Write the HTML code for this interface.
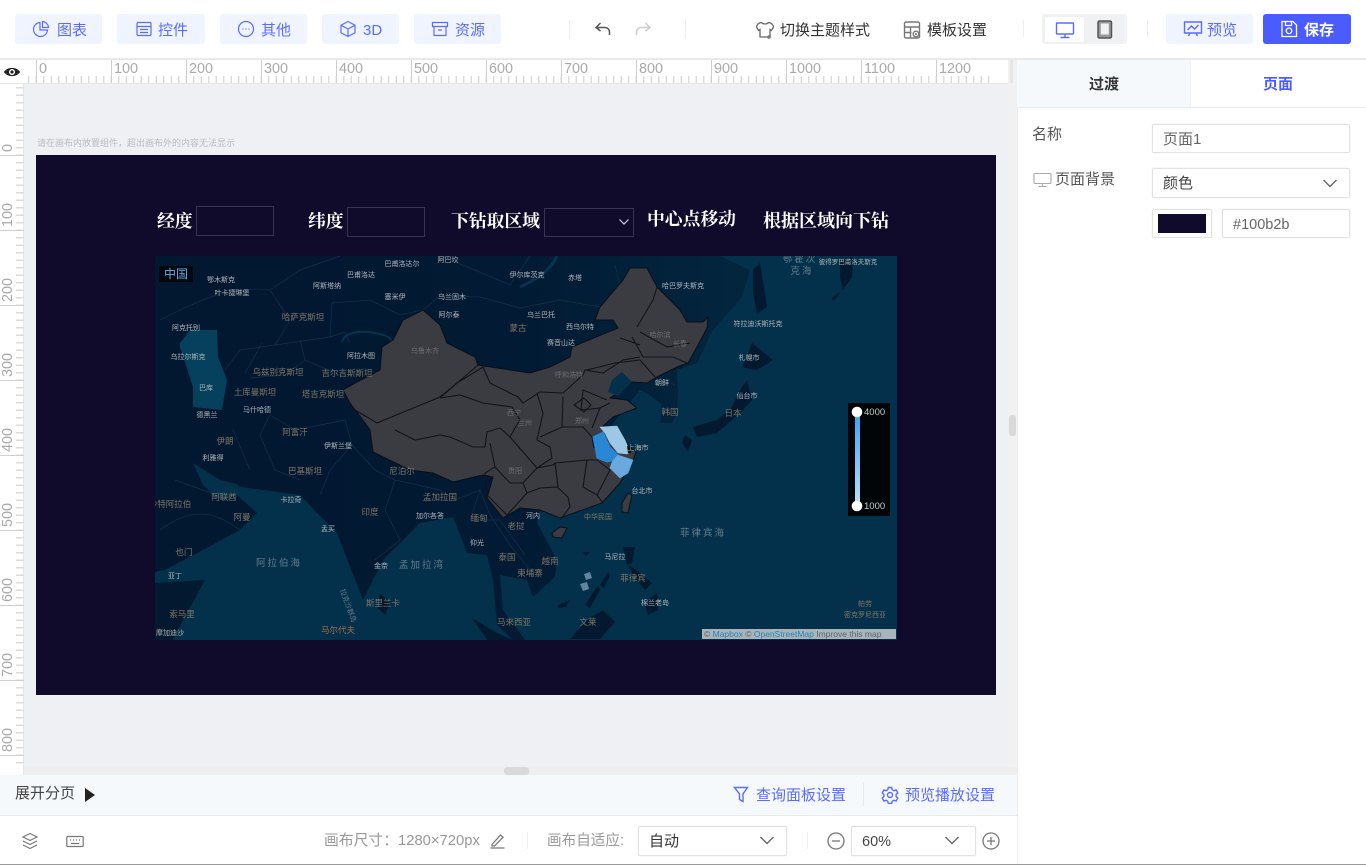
<!DOCTYPE html>
<html lang="zh"><head><meta charset="utf-8"><title>页面</title>
<style>
*{box-sizing:border-box}
html,body{margin:0;padding:0}
body{width:1366px;height:865px;position:relative;overflow:hidden;background:#fff;font-family:"Liberation Sans","Noto Sans CJK SC",sans-serif;font-size:15px;color:#333;filter:blur(.3px)}
.a,.t,.btn,.box,svg.i{position:absolute}
.t{white-space:nowrap;line-height:20px;margin-top:1px}
.btn{top:14px;height:30px;background:#f0f4ff;border-radius:3px;color:#5a6cff;line-height:30px;white-space:nowrap}
.btn svg{position:absolute;top:6px}
.btn span{position:absolute;top:2px}
.box{background:#fff;border:1px solid #e2e2e2;border-radius:2px;box-shadow:0 0 1px #ddd}
.rl{position:absolute;top:60px;font-size:14.4px;color:#aaa;line-height:18px}
.vl{position:absolute;left:0;font-size:14.4px;color:#aaa;line-height:16px;transform-origin:0 0;transform:rotate(-90deg);white-space:nowrap}
.mj{position:absolute;top:60px;width:1px;height:23px;background:#cfcfcf}
.mv{position:absolute;left:0;width:24px;height:1px;background:#cfcfcf}
.ctl{position:absolute;color:#fff;font-weight:700;font-size:17.8px;line-height:24px;white-space:nowrap;font-family:"Liberation Serif","Noto Serif CJK SC",serif}
.ib{position:absolute;border:1px solid #37324f}
svg text{font-family:"Liberation Sans","Noto Sans CJK SC",sans-serif}
.w text{fill:#b4b7ba;font-size:7px;text-anchor:middle}
.c text{fill:#7f7768;font-size:8.5px;text-anchor:middle}
.s text{fill:#647d8e;font-size:9.5px;text-anchor:middle;letter-spacing:2px}
</style></head><body>

<!-- top bar -->
<div class="a" style="left:0;top:58px;width:1366px;height:2px;background:#e9e9e9"></div>

<div class="btn" style="left:15px;width:87px"><svg style="left:17px" width="18" height="18" viewBox="0 0 18 18" fill="none" stroke="#5a6cff" stroke-width="1.2"><path d="M8 2.500A7 7 0 1 0 15.500 10H8Z"/><path d="M10.500 1.500A6.500 6.500 0 0 1 16.500 7.500H10.500Z"/></svg><span style="left:42px">图表</span></div>
<div class="btn" style="left:117px;width:88px"><svg style="left:18px" width="18" height="18" viewBox="0 0 18 18" fill="none" stroke="#5a6cff" stroke-width="1.2"><rect x="2" y="2.500" width="14" height="13" rx="1"/><path d="M2 6.500h14M5 9.500h8M5 12.500h8"/></svg><span style="left:41px">控件</span></div>
<div class="btn" style="left:220px;width:87px"><svg style="left:17px" width="18" height="18" viewBox="0 0 18 18" fill="none" stroke="#5a6cff" stroke-width="1.2"><circle cx="9" cy="9" r="7.500"/><path d="M5.500 9h1M8.500 9h1M11.500 9h1"/></svg><span style="left:41px">其他</span></div>
<div class="btn" style="left:322px;width:77px"><svg style="left:17px" width="18" height="18" viewBox="0 0 18 18" fill="none" stroke="#5a6cff" stroke-width="1.2"><path d="M9 1.500l7 3.700v7.600l-7 3.700-7-3.700V5.200zM2 5.200l7 3.800 7-3.800M9 9v7.500"/></svg><span style="left:41px">3D</span></div>
<div class="btn" style="left:414px;width:87px"><svg style="left:17px" width="18" height="18" viewBox="0 0 18 18" fill="none" stroke="#5a6cff" stroke-width="1.2"><path d="M1.500 2.500h15v4h-15zM3 6.500v9h12v-9M7 10h4"/></svg><span style="left:41px">资源</span></div>

<div class="a" style="left:569px;top:20px;width:1px;height:19px;background:#eee"></div>
<div class="a" style="left:685px;top:20px;width:1px;height:19px;background:#eee"></div>
<svg class="i" style="left:594px;top:21px" width="18" height="16" viewBox="0 0 18 16" fill="none" stroke="#555" stroke-width="1.500"><path d="M6.500 2 2 6.500 6.500 10M2 6.500h9a4.500 4.500 0 0 1 4.500 4.500v3"/></svg>
<svg class="i" style="left:634px;top:21px" width="18" height="16" viewBox="0 0 18 16" fill="none" stroke="#ccc" stroke-width="1.500"><path d="M11.500 2 16 6.500 11.500 10M16 6.500H7a4.500 4.500 0 0 0-4.500 4.500v3"/></svg>

<svg class="i" style="left:755px;top:20px" width="20" height="20" viewBox="0 0 20 20" fill="none" stroke="#666" stroke-width="1.300"><path d="M6.500 2.500C8 4.500 12 4.500 13.500 2.500 16 2.500 18.500 5 18.500 7L16.500 10.500 15 9.500V17H5V9.500L3.500 10.500 1.500 7C1.500 5 4 2.500 6.500 2.500Z"/><circle cx="14" cy="17" r="1.800" fill="#777" stroke="none"/></svg>
<span class="t" style="left:780px;top:20px">切换主题样式</span>
<svg class="i" style="left:903px;top:20px" width="18" height="20" viewBox="0 0 18 20" fill="none" stroke="#777" stroke-width="1.400"><rect x="1.500" y="2" width="15" height="16" rx="1.500"/><path d="M1.500 7h15M1.500 12.500h7M7.500 7v11"/><circle cx="13" cy="14" r="2.800" fill="#fff"/><circle cx="13" cy="14" r="1" fill="#666" stroke="none"/></svg>
<span class="t" style="left:927px;top:20px">模板设置</span>

<div class="a" style="left:1023px;top:20px;width:1px;height:17px;background:#eee"></div>
<div class="a" style="left:1147px;top:20px;width:1px;height:17px;background:#eee"></div>
<div class="a" style="left:1042px;top:14px;width:85px;height:30px;background:#f0f1f3;border-radius:3px"></div>
<div class="a" style="left:1045px;top:17px;width:39px;height:25px;background:#fff;border-radius:2px"></div>
<svg class="i" style="left:1055px;top:21px" width="20" height="18" viewBox="0 0 20 18" fill="none" stroke="#5a6cff" stroke-width="1.400"><rect x="1.500" y="2" width="17" height="11" rx=".5"/><path d="M10 13v3M5.500 16.500h9"/></svg>
<svg class="i" style="left:1096px;top:20px" width="18" height="19" viewBox="0 0 18 19" fill="none" stroke="#555" stroke-width="1.500"><rect x="2" y="1" width="13.500" height="17" rx="1.500" fill="#999"/><rect x="4.800" y="3.500" width="8" height="11" fill="#f0f1f3" stroke="none"/></svg>

<div class="btn" style="left:1166px;width:87px"><svg style="left:17px" width="20" height="18" viewBox="0 0 20 18" fill="none" stroke="#5a6cff" stroke-width="1.400"><path d="M1.500 2h17v11h-17zM1 2h18M4.500 10l4-4 3 3 4-4M7 13l-1.500 3M13 13l1.500 3"/></svg><span style="left:41px">预览</span></div>
<div class="btn" style="left:1263px;width:88px;background:#4a5cff;color:#fff;font-weight:700"><svg style="left:17px" width="18" height="18" viewBox="0 0 18 18" fill="none" stroke="#fff" stroke-width="1.300"><path d="M2 1.500h11l3.500 3.500v11.500h-14.500zM5.500 1.500v4h6v-4"/><circle cx="9" cy="10.800" r="2.800"/></svg><span style="left:41px">保存</span></div>

<!-- canvas area -->
<div class="a" style="left:24px;top:83px;width:984px;height:684px;background:#eff0f4"></div>
<div class="a" style="left:1008px;top:60px;width:9px;height:715px;background:#f1f1f2"></div>
<div class="a" style="left:1009px;top:415px;width:7px;height:21px;background:#d9d9d9;border-radius:3px"></div>
<div class="a" style="left:1010px;top:60px;width:3px;height:23px;background:#e6e6e6"></div>
<div class="a" style="left:0;top:767px;width:1017px;height:8px;background:#eeeeee"></div>
<div class="a" style="left:504px;top:767px;width:25px;height:8px;background:#d9d9d9;border-radius:3px"></div>

<!-- horizontal ruler -->
<div class="a" style="left:0;top:60px;width:1008px;height:24px;background:#fff;border-bottom:1px solid #e6e6e6"></div>
<div class="a" style="left:28px;top:76px;width:966px;height:7px;background:repeating-linear-gradient(90deg,#dcdcdc 0 1.500px,transparent 1.500px 7.500px)"></div>
<div class="mj" style="left:36px"></div><div class="mj" style="left:111px"></div><div class="mj" style="left:186px"></div><div class="mj" style="left:261px"></div><div class="mj" style="left:336px"></div><div class="mj" style="left:411px"></div><div class="mj" style="left:486px"></div><div class="mj" style="left:561px"></div><div class="mj" style="left:636px"></div><div class="mj" style="left:711px"></div><div class="mj" style="left:786px"></div><div class="mj" style="left:861px"></div><div class="mj" style="left:936px"></div>
<span class="rl" style="left:39px">0</span><span class="rl" style="left:114px">100</span><span class="rl" style="left:189px">200</span><span class="rl" style="left:264px">300</span><span class="rl" style="left:339px">400</span><span class="rl" style="left:414px">500</span><span class="rl" style="left:489px">600</span><span class="rl" style="left:564px">700</span><span class="rl" style="left:639px">800</span><span class="rl" style="left:714px">900</span><span class="rl" style="left:789px">1000</span><span class="rl" style="left:864px">1100</span><span class="rl" style="left:939px">1200</span>
<div class="a" style="left:1011px;top:60px;width:1px;height:23px;background:#cfcfcf;display:none"></div>

<!-- vertical ruler -->
<div class="a" style="left:0;top:84px;width:24px;height:691px;background:#fff;border-right:1px solid #e8e8e8;overflow:hidden"></div>
<div class="a" style="left:16px;top:87px;width:8px;height:680px;background:repeating-linear-gradient(180deg,#dcdcdc 0 1.500px,transparent 1.500px 7.500px)"></div>
<div class="mv" style="top:155px"></div><div class="mv" style="top:230px"></div><div class="mv" style="top:305px"></div><div class="mv" style="top:380px"></div><div class="mv" style="top:455px"></div><div class="mv" style="top:530px"></div><div class="mv" style="top:605px"></div><div class="mv" style="top:680px"></div><div class="mv" style="top:755px"></div>
<span class="vl" style="top:152px">0</span><span class="vl" style="top:227px">100</span><span class="vl" style="top:302px">200</span><span class="vl" style="top:377px">300</span><span class="vl" style="top:452px">400</span><span class="vl" style="top:527px">500</span><span class="vl" style="top:602px">600</span><span class="vl" style="top:677px">700</span><span class="vl" style="top:752px">800</span>

<svg class="i" style="left:3px;top:65px" width="18" height="14" viewBox="0 0 18 14"><path d="M1 7C4 1.500 14 1.500 17 7 14 12.500 4 12.500 1 7Z" fill="#222"/><circle cx="9" cy="7" r="3" fill="#fff"/><circle cx="9" cy="7" r="1.600" fill="#222"/></svg>

<span class="t" style="left:37px;top:132px;font-size:9px;color:#bbb">请在画布内放置组件，超出画布外的内容无法显示</span>

<!-- canvas -->
<div class="a" style="left:36px;top:155px;width:960px;height:540px;background:#100b2b"></div>
<span class="ctl" style="left:157px;top:209px">经度</span>
<div class="ib" style="left:196px;top:206px;width:78px;height:30px"></div>
<span class="ctl" style="left:308px;top:209px">纬度</span>
<div class="ib" style="left:347px;top:207px;width:78px;height:30px"></div>
<span class="ctl" style="left:451px;top:209px">下钻取区域</span>
<div class="ib" style="left:544px;top:208px;width:90px;height:29px"></div>
<svg class="i" style="left:618px;top:218px" width="12" height="8" viewBox="0 0 12 8" fill="none" stroke="#c9d4ea" stroke-width="1.200"><path d="M1.500 1.500 6 6l4.500-4.500"/></svg>
<span class="ctl" style="left:647px;top:207px">中心点移动</span>
<span class="ctl" style="left:763px;top:209px;font-size:18px">根据区域向下钻</span>

<!-- map -->
<svg class="i" style="left:0;top:0;filter:blur(.35px)" width="1366" height="865" viewBox="0 0 1366 865">
<defs><clipPath id="mc"><rect x="155" y="256" width="742" height="384"/></clipPath>
<linearGradient id="ld" x1="0" y1="0" x2="1" y2="0"><stop offset="0" stop-color="#021730"/><stop offset=".6" stop-color="#021a33"/><stop offset="1" stop-color="#03263f"/></linearGradient></defs>
<g clip-path="url(#mc)">
<rect x="155" y="256" width="742" height="384" fill="#03304a"/>
<!-- land -->
<g fill="url(#ld)">
<path d="M155 256H720L750 270 742 297 713 330 697 363 677 370 678 395 677 413 672 423 660 423 662 405 650 395 640 390 600 440 540 510 537 523 557 560 555 577 533 597 527 580 515 578 500 575 503 610 523 637 525 640 513 640 497 625 493 580 487 555 467 553 453 517 420 523 383 560 363 600 337 533 317 513 300 495 240 487 237 484 220 480 193 463 203 485 217 498 226 500 237 495 257 513 240 530 203 550 165 570 155 572Z"/>
</g>
<g fill="#02192f">
<path d="M155 583 205 580 183 620 173 640H155Z"/>
<path d="M753 270 760 263 767 307 757 313 753 293Z"/>
<path d="M752 343 773 360 757 370 742 367 748 353Z"/>
<path d="M747 380 752 400 743 410 717 433 697 437 693 427 717 420 730 410 742 387Z"/>
<path d="M685 435 692 440 688 452 682 443Z"/>
<path d="M840 260 853 257 852 277 843 290 840 277Z"/>
<path d="M380 593 390 603 385 615 378 608Z"/>
<path d="M623 547 635 547 632 563 627 565Z"/>
<path d="M628 565 636 570 652 583 645 590 635 578Z"/>
<path d="M645 603 657 593 658 610 648 615Z"/>
<path d="M570 639 587 620 603 610 615 622 600 639Z"/>
<path d="M472 618 497 633 513 640H487Z"/>
<path d="M585 605 598 585 600 590 590 608ZM600 585 608 572 610 575 604 588ZM558 605 570 600 566 607 558 608ZM583 552 590 552 586 556Z"/>
<path d="M832 298 840 292 838 296 833 301Z"/>
</g>
<path d="M180 343 190 330 217 330 218 357 227 380 222 410 193 407 193 387 180 347Z" fill="#05405c"/>
<g fill="none" stroke="#05344f">
<path d="M342 342C345 332 360 330 375 333S390 338 392 342" stroke-width="2"/>
<path d="M520 287C535 280 550 272 557 256" stroke-width="3"/>
</g>
<!-- faint borders -->
<g fill="none" stroke="#14304a" stroke-width=".7">
<path d="M160 320C200 300 230 285 270 290L300 270 340 256M270 290 290 320 275 345 240 350 225 370M275 345 330 337 345 332 350 343M245 373 262 343M300 340 305 360 340 375M305 360 285 375 250 378M330 337 332 303 370 300 400 315 423 310"/>
<path d="M423 310 440 296 480 297 520 308 560 300 600 307 620 285 615 265M530 256 510 285 470 268 440 256"/>
<path d="M295 430 270 415 260 435 275 470 300 480M295 430 345 420 352 445 375 470 395 480 385 510 400 540 375 560M352 445 330 470 320 495M395 480 440 490 455 500 480 490 490 515 510 545 530 570M480 490 470 520 500 520 525 555M233 430 250 470M160 530C200 500 225 520 240 530M175 480 230 500"/>
<path d="M660 378 675 385"/>
</g>
<!-- China -->
<path id="cn" d="M423 310 440 325 447 343 475 357 478 365 530 373 550 367 570 357 572 347 618 328 613 320 595 320 600 307 623 280 630 268 647 268 657 287 680 310 687 322 703 322 708 317 707 328 697 347 688 363 677 367 657 377 647 383 632 382 622 390 610 398 627 400 637 408 613 417 602 427 617 426 628 445 636 452 633 460 620 483 602 503 560 518 540 510 520 508 503 518 487 498 493 477 483 475 453 482 433 473 410 470 373 452 370 430 363 420 350 403 343 390 357 382 380 370 382 347 393 340 403 320Z" fill="#3a3c42" stroke="#0a0f18" stroke-width="1"/>
<path d="M552 533 560 527 567 528 562 538 553 537Z" fill="#3a3c42" stroke="#0a0f18"/>
<path d="M622 503 628 493 632 495 628 513 622 512Z" fill="#3a3c42" stroke="#0a0f18"/>
<path d="M632 382 622 372 612 380 608 392 618 396Z" fill="#03304a"/>
<!-- provinces -->
<g fill="none" stroke="#121418" stroke-width="1.100">
<path d="M350 407 377 423 440 397 457 383 478 365"/>
<path d="M440 398 457 383 483 367 490 383 518 397 523 403 540 392 563 393 583 375 585 370 603 373 623 360 640 357"/>
<path d="M440 398 460 395 483 403 512 407 520 420 515 428 510 437 500 428 487 432 485 447 473 447 450 437 440 435 415 440 395 430"/>
<path d="M490 443 495 467 485 473 487 495 507 515"/>
<path d="M495 467 510 483 523 483 527 493 507 515M527 493 540 488 557 487 568 497 570 507 560 520"/>
<path d="M523 483 537 468 553 465 555 463 587 460 597 460"/>
<path d="M537 393 543 413 537 440 550 447 552 458 537 468 510 437"/>
<path d="M563 397 562 427 540 437M562 427 583 427 592 437 594 448"/>
<path d="M555 463 558 487M587 460 583 487 597 495 603 503M597 460 610 470 597 495"/>
<path d="M583 390 581 410 600 408 610 403M583 390 607 400M587 370 615 363 640 360 655 377"/>
<path d="M632 337 643 357 673 357 687 363M637 327 653 300 657 287M640 332 667 347 690 343M620 338 640 345"/>
<path d="M600 408 592 428"/>
<path d="M574 405 584 398 591 405 584 412Z"/>
</g>
<path d="M593 437 603 432 610 447 618 455 615 460 607 462 597 458 595 447Z" fill="#2a87d6" stroke="#2a87d6" stroke-width="1"/>
<path d="M600 427 617 426 625 440 630 452 627 454 618 453 610 443 605 433Z" fill="#9cc8e6" stroke="#9cc8e6" stroke-width=".6"/>
<path d="M618 455 633 460 628 473 620 478 610 468 612 462Z" fill="#6aa9de" stroke="#6aa9de" stroke-width=".6"/>
<path d="M627 446 632 448 631 453 628 453Z" fill="#0c0f14"/>
<path d="M584 574 590 572 592 578 586 580ZM580 584 587 582 589 589 583 591Z" fill="#7fa3bb" opacity=".75"/>
<!-- labels -->
<g class="w">
<text x="402" y="266">巴甫洛达尔</text><text x="448" y="262">阿巴坎</text><text x="527" y="277">伊尔库茨克</text><text x="327" y="288">阿斯塔纳</text><text x="361" y="277">巴甫洛达</text><text x="395" y="299">塞米伊</text><text x="452" y="299">乌兰固木</text><text x="449" y="317">阿尔泰</text><text x="541" y="317">乌兰巴托</text><text x="361" y="358">阿拉木图</text><text x="207" y="417">德黑兰</text><text x="206" y="390">巴库</text><text x="257" y="412">马什哈德</text><text x="338" y="448">伊斯兰堡</text><text x="291" y="502">卡拉奇</text><text x="430" y="518">加尔各答</text><text x="533" y="518">河内</text><text x="328" y="531">孟买</text><text x="477" y="545">仰光</text><text x="381" y="568">金奈</text><text x="170" y="635">摩加迪沙</text><text x="213" y="460">利雅得</text><text x="749" y="360">札幌市</text><text x="747" y="398">仙台市</text><text x="758" y="326">符拉迪沃斯托克</text><text x="638" y="450">上海市</text><text x="642" y="493">台北市</text><text x="615" y="559">马尼拉</text><text x="655" y="605">棉兰老岛</text><text x="580" y="329">西乌尔特</text><text x="561" y="345">赛音山达</text><text x="683" y="288">哈巴罗夫斯克</text><text x="662" y="385">朝鲜</text><text x="575" y="280">赤塔</text><text x="221" y="282">鄂木斯克</text><text x="232" y="295">叶卡捷琳堡</text><text x="186" y="330">阿克托别</text><text x="188" y="359">乌拉尔斯克</text><text x="175" y="578">亚丁</text></g>
<g class="c">
<text x="303" y="320">哈萨克斯坦</text><text x="518" y="331">蒙古</text><text x="278" y="375">乌兹别克斯坦</text><text x="347" y="376">吉尔吉斯斯坦</text><text x="255" y="395">土库曼斯坦</text><text x="323" y="397">塔吉克斯坦</text><text x="295" y="435">阿富汗</text><text x="225" y="444">伊朗</text><text x="305" y="474">巴基斯坦</text><text x="402" y="474">尼泊尔</text><text x="440" y="500">孟加拉国</text><text x="370" y="515">印度</text><text x="479" y="521">缅甸</text><text x="516" y="529">老挝</text><text x="507" y="560">泰国</text><text x="530" y="576">柬埔寨</text><text x="550" y="564">越南</text><text x="383" y="606">斯里兰卡</text><text x="514" y="625">马来西亚</text><text x="182" y="617">索马里</text><text x="170" y="507">沙特阿拉伯</text><text x="242" y="520">阿曼</text><text x="224" y="500">阿联酋</text><text x="184" y="555">也门</text><text x="733" y="416">日本</text><text x="670" y="415">韩国</text><text x="633" y="581">菲律宾</text><text x="588" y="625">文莱</text><text x="598" y="519" style="font-size:7px">中华民国</text><text x="865" y="606" style="font-size:7px">帕劳</text><text x="865" y="617" style="font-size:7px">密克罗尼西亚</text><text x="338" y="633" style="fill:#a3704d">马尔代夫</text></g>
<g class="w" style="opacity:.4"><text x="425" y="353">乌鲁木齐</text><text x="569" y="377">呼和浩特</text><text x="660" y="337">哈尔滨</text><text x="680" y="346">长春</text><text x="525" y="425">兰州</text><text x="582" y="423">郑州</text><text x="515" y="473">贵阳</text><text x="514" y="415">西宁</text></g>
<g class="s"><text x="279" y="566">阿拉伯海</text><text x="422" y="568">孟加拉湾</text><text x="703" y="536">菲律宾海</text><text x="800" y="262">鄂霍次</text><text x="802" y="274">克海</text></g>
<text x="340" y="590" style="fill:#647d8e;font-size:7px" transform="rotate(70 340 590)">拉克沙群岛</text>
<text x="848" y="264" style="fill:#b4b7ba;font-size:6.500px;text-anchor:middle">彼得罗巴甫洛夫斯克</text>
</g>
<!-- attribution -->
<rect x="702" y="629" width="194" height="10" fill="#a9b3b9"/>
<text x="704" y="637" style="font-size:8.500px;fill:#5c676d">©<tspan fill="#2a85b8"> Mapbox </tspan>©<tspan fill="#2a85b8"> OpenStreetMap </tspan>Improve this map</text>
<!-- legend -->
<rect x="848" y="403" width="42" height="113" fill="#020508"/>
<defs><linearGradient id="lg" x1="0" y1="0" x2="0" y2="1"><stop offset="0" stop-color="#3aa0f0"/><stop offset="1" stop-color="#bfe0f8"/></linearGradient></defs>
<rect x="855" y="412" width="5" height="94" fill="url(#lg)"/>
<circle cx="857" cy="412" r="5.300" fill="#fff"/><circle cx="857" cy="506" r="5.300" fill="#fff"/>
<text x="864" y="415" style="font-size:9.500px;fill:#c9c9c9">4000</text><text x="864" y="509" style="font-size:9.500px;fill:#c9c9c9">1000</text>
<rect x="159" y="266" width="34" height="16" fill="#02060e"/>
<text x="164" y="278" style="font-size:12px;fill:#5bb0e8">中国</text>
</svg>

<!-- right panel -->
<div class="a" style="left:1017px;top:60px;width:349px;height:805px;background:#fff;border-left:1px solid #ececec"></div>
<div class="a" style="left:1017px;top:60px;width:173px;height:47px;background:#f5f9fc"></div>
<div class="a" style="left:1190px;top:60px;width:1px;height:47px;background:#eef1f5"></div>
<div class="a" style="left:1017px;top:107px;width:349px;height:1px;background:#eaeef2"></div>
<span class="t" style="left:1089px;top:74px;font-weight:700;color:#333">过渡</span>
<span class="t" style="left:1263px;top:74px;font-weight:700;color:#4a5cff">页面</span>
<span class="t" style="left:1032px;top:124px;color:#555">名称</span>
<div class="box" style="left:1152px;top:124px;width:198px;height:29px"></div>
<span class="t" style="left:1163px;top:129px;color:#666">页面1</span>
<svg class="i" style="left:1033px;top:172px" width="19" height="16" viewBox="0 0 19 16" fill="none" stroke="#aaa" stroke-width="1.100"><rect x="1" y="1.500" width="17" height="10" rx="1"/><path d="M9.500 11.500v2.500M5.500 14.500h8"/></svg>
<span class="t" style="left:1055px;top:169px;color:#555">页面背景</span>
<div class="box" style="left:1152px;top:168px;width:198px;height:30px"></div>
<span class="t" style="left:1163px;top:173px;color:#444">颜色</span>
<svg class="i" style="left:1322px;top:178px" width="16" height="11" viewBox="0 0 16 11" fill="none" stroke="#666" stroke-width="1.400"><path d="M1.500 2 8 8.500 14.500 2"/></svg>
<div class="box" style="left:1152px;top:209px;width:60px;height:29px"></div>
<div class="a" style="left:1158px;top:214px;width:48px;height:19px;background:#100b2b"></div>
<div class="box" style="left:1222px;top:209px;width:128px;height:29px"></div>
<span class="t" style="left:1233px;top:214px;color:#666;font-size:14.500px">#100b2b</span>

<!-- page bar -->
<div class="a" style="left:0;top:775px;width:1017px;height:41px;background:#f5f9fc;border-bottom:1px solid #e6e9ec"></div>
<span class="t" style="left:15px;top:783px;color:#444">展开分页</span>
<svg class="i" style="left:85px;top:788px" width="10" height="14" viewBox="0 0 10 14"><path d="M0 0 10 7 0 14Z" fill="#222"/></svg>
<svg class="i" style="left:733px;top:786px" width="16" height="17" viewBox="0 0 16 17" fill="none" stroke="#5a6cff" stroke-width="1.400"><path d="M1.500 1.500h13L10 8v7.500L6.500 13.500V8Z"/></svg>
<span class="t" style="left:756px;top:785px;color:#5a6cff">查询面板设置</span>
<div class="a" style="left:863px;top:783px;width:1px;height:24px;background:#e8ebf0"></div>
<svg class="i" style="left:881px;top:786px" width="18" height="18" viewBox="0 0 18 18" fill="none" stroke="#5a6cff" stroke-width="1.400"><path d="M7.300 1.500h3.400l.5 2.200 1.700 1 2.200-.7 1.700 3-1.700 1.500v2l1.700 1.500-1.700 3-2.200-.7-1.700 1-.5 2.200H7.300l-.5-2.200-1.700-1-2.200.7-1.700-3 1.700-1.500v-2L1.200 7l1.700-3 2.200.7 1.700-1Z"/><circle cx="9" cy="9" r="2.500"/></svg>
<span class="t" style="left:905px;top:785px;color:#5a6cff">预览播放设置</span>

<!-- bottom bar -->
<svg class="i" style="left:21px;top:832px" width="18" height="18" viewBox="0 0 18 18" fill="none" stroke="#777" stroke-width="1.200"><path d="M9 1.500 16 5 9 8.500 2 5ZM2 9l7 3.500L16 9M2 13l7 3.500 7-3.500"/></svg>
<svg class="i" style="left:66px;top:835px" width="18" height="13" viewBox="0 0 18 13" fill="none" stroke="#777" stroke-width="1.200"><rect x=".8" y="1.500" width="16.400" height="10" rx="1"/><path d="M4 5h1M7 5h1M10 5h1M13 5h1M5 8.500h8"/></svg>
<span class="t" style="left:324px;top:830px;color:#999;font-size:14.800px">画布尺寸：1280×720px</span>
<svg class="i" style="left:489px;top:832px" width="17" height="17" viewBox="0 0 17 17" fill="none" stroke="#777" stroke-width="1.300"><path d="M3 12.500 11.500 3 14 5.300 5.500 14H3ZM1.500 16h14"/></svg>
<div class="a" style="left:527px;top:832px;width:1px;height:17px;background:#eee"></div>
<span class="t" style="left:547px;top:830px;color:#999;font-size:14.600px">画布自适应:</span>
<div class="box" style="left:638px;top:826px;width:149px;height:30px"></div>
<span class="t" style="left:649px;top:831px;color:#333">自动</span>
<svg class="i" style="left:759px;top:835px" width="16" height="11" viewBox="0 0 16 11" fill="none" stroke="#666" stroke-width="1.400"><path d="M1.500 2 8 8.500 14.500 2"/></svg>
<div class="a" style="left:807px;top:832px;width:1px;height:17px;background:#eee"></div>
<svg class="i" style="left:827px;top:832px" width="18" height="18" viewBox="0 0 18 18" fill="none" stroke="#777" stroke-width="1.300"><circle cx="9" cy="9" r="8"/><path d="M5 9h8"/></svg>
<div class="box" style="left:851px;top:826px;width:125px;height:30px"></div>
<span class="t" style="left:862px;top:831px;color:#444;font-size:14.500px">60%</span>
<svg class="i" style="left:944px;top:835px" width="16" height="11" viewBox="0 0 16 11" fill="none" stroke="#666" stroke-width="1.400"><path d="M1.500 2 8 8.500 14.500 2"/></svg>
<svg class="i" style="left:982px;top:832px" width="18" height="18" viewBox="0 0 18 18" fill="none" stroke="#777" stroke-width="1.300"><circle cx="9" cy="9" r="8"/><path d="M5 9h8M9 5v8"/></svg>
<div class="a" style="left:0;top:864px;width:1366px;height:1px;background:#9a9a9a"></div>
</body></html>
